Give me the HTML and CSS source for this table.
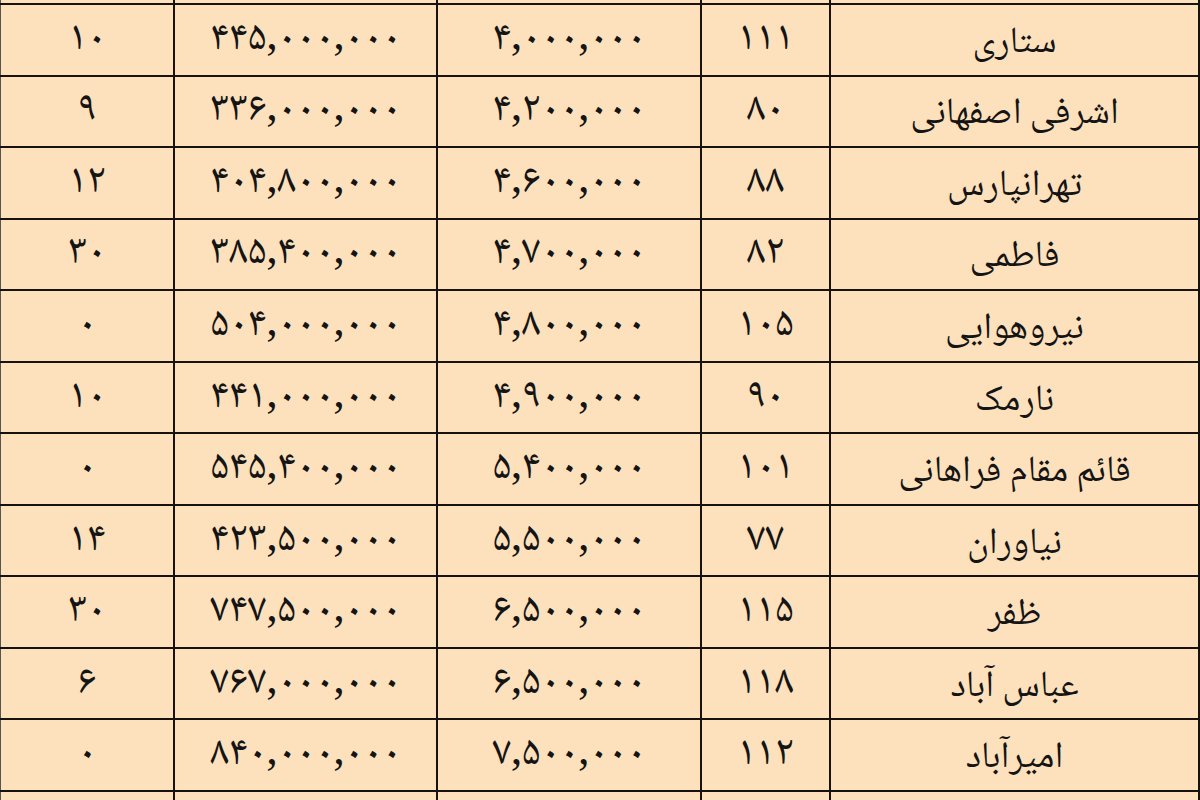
FILE: index.html
```html
<!DOCTYPE html>
<html lang="fa" dir="rtl">
<head>
<meta charset="utf-8">
<title>جدول قیمت</title>
<link rel="stylesheet" href="styles.css">
</head>
<body>
<table class="grid">
  <colgroup>
    <col class="c-name"><col class="c-area"><col class="c-price"><col class="c-total"><col class="c-age">
  </colgroup>
  <tbody>
    <tr class="edge-top"><td></td><td></td><td></td><td></td><td></td></tr>
    <tr><td class="name"><div class="v">ستاری</div></td><td><div class="v">۱۱۱</div></td><td><div class="v">۴,۰۰۰,۰۰۰</div></td><td><div class="v">۴۴۵,۰۰۰,۰۰۰</div></td><td><div class="v">۱۰</div></td></tr>
    <tr><td class="name"><div class="v">اشرفی اصفهانی</div></td><td><div class="v">۸۰</div></td><td><div class="v">۴,۲۰۰,۰۰۰</div></td><td><div class="v">۳۳۶,۰۰۰,۰۰۰</div></td><td><div class="v">۹</div></td></tr>
    <tr><td class="name"><div class="v">تهرانپارس</div></td><td><div class="v">۸۸</div></td><td><div class="v">۴,۶۰۰,۰۰۰</div></td><td><div class="v">۴۰۴,۸۰۰,۰۰۰</div></td><td><div class="v">۱۲</div></td></tr>
    <tr><td class="name"><div class="v">فاطمی</div></td><td><div class="v">۸۲</div></td><td><div class="v">۴,۷۰۰,۰۰۰</div></td><td><div class="v">۳۸۵,۴۰۰,۰۰۰</div></td><td><div class="v">۳۰</div></td></tr>
    <tr><td class="name"><div class="v">نیروهوایی</div></td><td><div class="v">۱۰۵</div></td><td><div class="v">۴,۸۰۰,۰۰۰</div></td><td><div class="v">۵۰۴,۰۰۰,۰۰۰</div></td><td><div class="v">۰</div></td></tr>
    <tr><td class="name"><div class="v">نارمک</div></td><td><div class="v">۹۰</div></td><td><div class="v">۴,۹۰۰,۰۰۰</div></td><td><div class="v">۴۴۱,۰۰۰,۰۰۰</div></td><td><div class="v">۱۰</div></td></tr>
    <tr><td class="name"><div class="v">قائم مقام فراهانی</div></td><td><div class="v">۱۰۱</div></td><td><div class="v">۵,۴۰۰,۰۰۰</div></td><td><div class="v">۵۴۵,۴۰۰,۰۰۰</div></td><td><div class="v">۰</div></td></tr>
    <tr><td class="name"><div class="v">نیاوران</div></td><td><div class="v">۷۷</div></td><td><div class="v">۵,۵۰۰,۰۰۰</div></td><td><div class="v">۴۲۳,۵۰۰,۰۰۰</div></td><td><div class="v">۱۴</div></td></tr>
    <tr><td class="name"><div class="v">ظفر</div></td><td><div class="v">۱۱۵</div></td><td><div class="v">۶,۵۰۰,۰۰۰</div></td><td><div class="v">۷۴۷,۵۰۰,۰۰۰</div></td><td><div class="v">۳۰</div></td></tr>
    <tr><td class="name"><div class="v">عباس آباد</div></td><td><div class="v">۱۱۸</div></td><td><div class="v">۶,۵۰۰,۰۰۰</div></td><td><div class="v">۷۶۷,۰۰۰,۰۰۰</div></td><td><div class="v">۶</div></td></tr>
    <tr><td class="name"><div class="v">امیرآباد</div></td><td><div class="v">۱۱۲</div></td><td><div class="v">۷,۵۰۰,۰۰۰</div></td><td><div class="v">۸۴۰,۰۰۰,۰۰۰</div></td><td><div class="v">۰</div></td></tr>
    <tr class="edge-bottom"><td></td><td></td><td></td><td></td><td></td></tr>
  </tbody>
</table>
</body>
</html>
```
FILE: styles.css
```css
html, body {
  margin: 0;
  padding: 0;
  background: #fde0bc;
  overflow: hidden;
}

.grid {
  width: 1199px;
  border-collapse: collapse;
  table-layout: fixed;
  direction: rtl;
  background: #fde0bc;
  color: #141414;
  font-family: "Noto Naskh Arabic", "Noto Sans Arabic", "DejaVu Sans", sans-serif;
  font-size: 42px;
}

.c-name { width: 369px; }
.c-area { width: 129px; }
.c-price { width: 264px; }
.c-total { width: 263px; }
.c-age { width: 174px; }

.grid td {
  border: 2px solid #161210;
  text-align: center;
  vertical-align: middle;
  padding: 0;
  height: 69.55px;
  white-space: nowrap;
}

.grid td:last-child {
  border-left-color: #555;
}

.v {
  height: 40px;
  line-height: 40px;
  overflow: visible;
}

.grid .edge-top td {
  height: 3px;
  border-top: none;
}

.grid .edge-bottom td {
  height: 8px;
  border-bottom: none;
}

.grid .name .v {
  font-size: 37px;
  height: 36px;
  padding-top: 4px;
}
```
